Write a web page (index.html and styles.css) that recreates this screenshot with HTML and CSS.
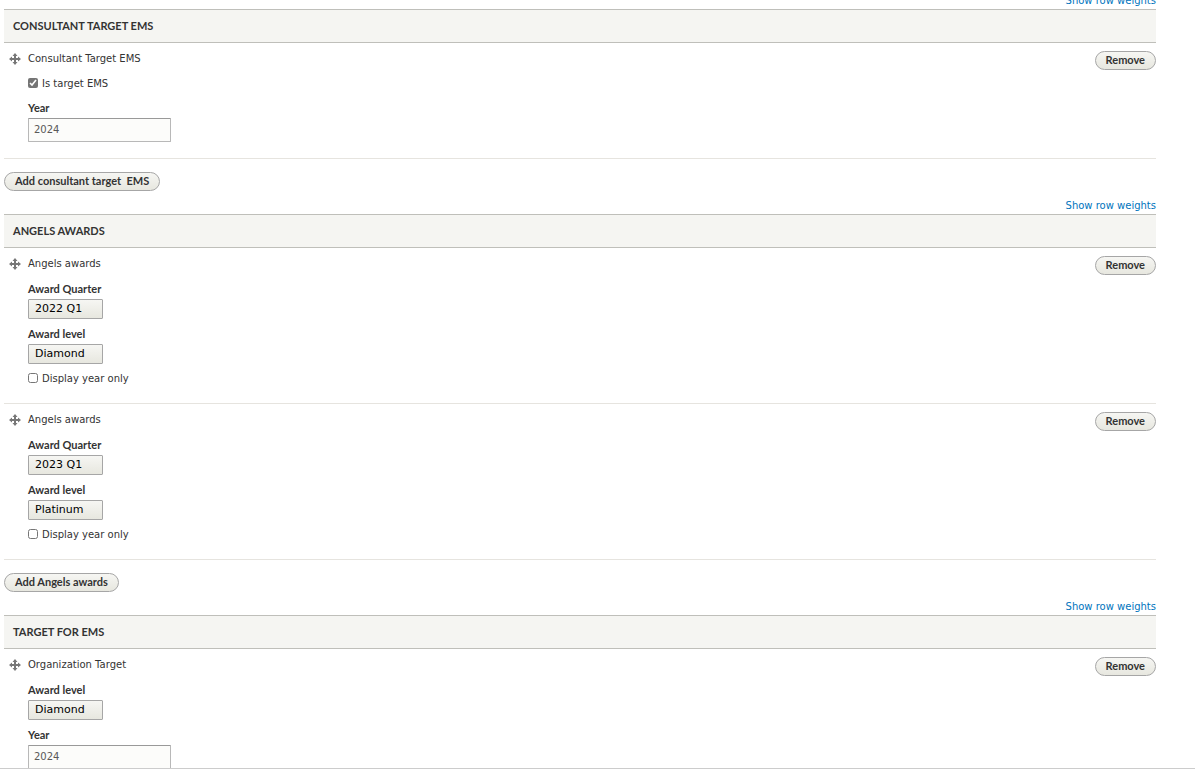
FILE: index.html
```html
<!DOCTYPE html>
<html lang="en">
<head>
    <meta charset="UTF-8">
    <meta name="viewport" content="width=device-width, initial-scale=1.0">
    <title>Edit organization</title>
    <link rel="stylesheet" href="styles.css">
</head>
<body>
    <!-- Shared drag handle icon -->
    <svg class="icon-defs" aria-hidden="true">
        <symbol id="move" viewBox="0 0 12 12">
            <path fill="#777" d="M5 5V3H3.500L6 0l2.500 3H7v2h2V3.500L12 6 9 8.500V7H7v2h1.500L6 12 3.500 9H5V7H3v1.500L0 6l3-2.500V5z"/>
        </symbol>
    </svg>

    <main class="page">
        <form class="content">
            <div class="weights"><a href="#">Show row weights</a></div>
            <table class="field-table">
                <thead>
                    <tr><th colspan="3">Consultant Target EMS</th></tr>
                </thead>
                <tbody>
                    <tr>
                        <td class="drag"><a href="#" aria-label="Move"><svg class="handle"><use href="#move"/></svg></a></td>
                        <td class="fields">
                            <div class="row-title">Consultant Target EMS</div>
                            <div class="form-item check">
                                <input type="checkbox" id="is-target" checked>
                                <label for="is-target">Is target EMS</label>
                            </div>
                            <div class="form-item">
                                <label for="target-year">Year</label>
                                <input type="text" id="target-year" value="2024">
                            </div>
                        </td>
                        <td class="actions"><button type="button" class="button">Remove</button></td>
                    </tr>
                </tbody>
            </table>
            <button type="button" class="button add">Add consultant target&nbsp; EMS</button>

            <div class="weights"><a href="#">Show row weights</a></div>
            <table class="field-table">
                <thead>
                    <tr><th colspan="3">Angels awards</th></tr>
                </thead>
                <tbody>
                    <tr>
                        <td class="drag"><a href="#" aria-label="Move"><svg class="handle"><use href="#move"/></svg></a></td>
                        <td class="fields">
                            <div class="row-title">Angels awards</div>
                            <div class="form-item">
                                <label for="quarter-1">Award Quarter</label>
                                <select id="quarter-1"><option>2022 Q1</option></select>
                            </div>
                            <div class="form-item">
                                <label for="level-1">Award level</label>
                                <select id="level-1"><option>Diamond</option></select>
                            </div>
                            <div class="form-item check">
                                <input type="checkbox" id="year-only-1">
                                <label for="year-only-1">Display year only</label>
                            </div>
                        </td>
                        <td class="actions"><button type="button" class="button">Remove</button></td>
                    </tr>
                    <tr>
                        <td class="drag"><a href="#" aria-label="Move"><svg class="handle"><use href="#move"/></svg></a></td>
                        <td class="fields">
                            <div class="row-title">Angels awards</div>
                            <div class="form-item">
                                <label for="quarter-2">Award Quarter</label>
                                <select id="quarter-2"><option>2023 Q1</option></select>
                            </div>
                            <div class="form-item">
                                <label for="level-2">Award level</label>
                                <select id="level-2"><option>Platinum</option></select>
                            </div>
                            <div class="form-item check">
                                <input type="checkbox" id="year-only-2">
                                <label for="year-only-2">Display year only</label>
                            </div>
                        </td>
                        <td class="actions"><button type="button" class="button">Remove</button></td>
                    </tr>
                </tbody>
            </table>
            <button type="button" class="button add">Add Angels awards</button>

            <div class="weights"><a href="#">Show row weights</a></div>
            <table class="field-table">
                <thead>
                    <tr><th colspan="3">Target for EMS</th></tr>
                </thead>
                <tbody>
                    <tr>
                        <td class="drag"><a href="#" aria-label="Move"><svg class="handle"><use href="#move"/></svg></a></td>
                        <td class="fields">
                            <div class="row-title">Organization Target</div>
                            <div class="form-item">
                                <label for="org-level">Award level</label>
                                <select id="org-level"><option>Diamond</option></select>
                            </div>
                            <div class="form-item">
                                <label for="org-year">Year</label>
                                <input type="text" id="org-year" value="2024">
                            </div>
                        </td>
                        <td class="actions"><button type="button" class="button">Remove</button></td>
                    </tr>
                </tbody>
            </table>
        </form>
    </main>
</body>
</html>
```
FILE: styles.css
```css
* {
    box-sizing: border-box;
}

body {
    margin: 0;
    background: #fff;
    color: #333;
    font: 10px/16px "DejaVu Sans", sans-serif;
}

.icon-defs {
    display: none;
}

.page {
    height: 100vh;
    overflow: hidden;
    border-bottom: 1px solid #ccc;
}

/* The form is scrolled slightly past its first link */
.content {
    margin: -8px 39px 0 4px;
}

.weights {
    height: 17px;
    line-height: 18px;
    text-align: right;
}

.weights a {
    color: #0074bd;
    text-decoration: none;
}

/* Tables */
.field-table {
    width: 100%;
    border-collapse: separate;
    border-spacing: 0;
}

.field-table th {
    height: 34px;
    padding: 0 9px;
    border-top: 1px solid #bfbfba;
    border-bottom: 1px solid #bfbfba;
    background: #f5f5f2;
    font: 700 11px/16px Lato, sans-serif;
    text-align: left;
    text-transform: uppercase;
}

.field-table td {
    padding: 8px 0 16px;
    border-bottom: 1px solid #e6e4df;
    vertical-align: top;
}

.field-table .drag {
    width: 24px;
    padding-left: 5px;
}

.field-table .actions {
    width: 80px;
    text-align: right;
}

.handle {
    display: block;
    width: 12px;
    height: 12px;
    margin-top: 2px;
}

.row-title {
    margin-bottom: 9px;
}

/* Form elements */
.form-item + .form-item {
    margin-top: 7px;
}

.form-item label {
    display: block;
    margin-bottom: 2px;
    font: 700 11px/16px Lato, sans-serif;
}

.form-item.check {
    display: flex;
    gap: 4px;
}

.check label {
    margin: 0;
    font: inherit;
}

.check input {
    width: 10px;
    height: 10px;
    margin: 2px 0 0;
    accent-color: #757575;
}

.check + .form-item {
    margin-top: 8px;
}

.form-item input[type="text"] {
    display: block;
    width: 143px;
    height: 24px;
    padding: 0 5px 2px;
    border: 1px solid #b8b8b8;
    border-top-color: #999;
    border-radius: 1px;
    background: #fcfcfa;
    color: #595959;
    font: inherit;
}

select {
    display: block;
    min-width: 75px;
    height: 20px;
    padding: 0 6px;
    appearance: none;
    border: 1px solid #a6a6a6;
    border-radius: 1px;
    background: linear-gradient(#f6f6f3, #e7e7df);
    color: #000;
    font: 11px/16px "DejaVu Sans", sans-serif;
}

.button {
    height: 19px;
    padding: 0 10px 2px;
    border: 1px solid #a6a6a6;
    border-radius: 10px;
    background: linear-gradient(#f6f6f3, #e7e7df);
    color: #333;
    font: 700 11px/16px Lato, sans-serif;
    vertical-align: top;
    cursor: pointer;
}

.button.add {
    display: block;
    margin: 13px 0 6px;
}
```
